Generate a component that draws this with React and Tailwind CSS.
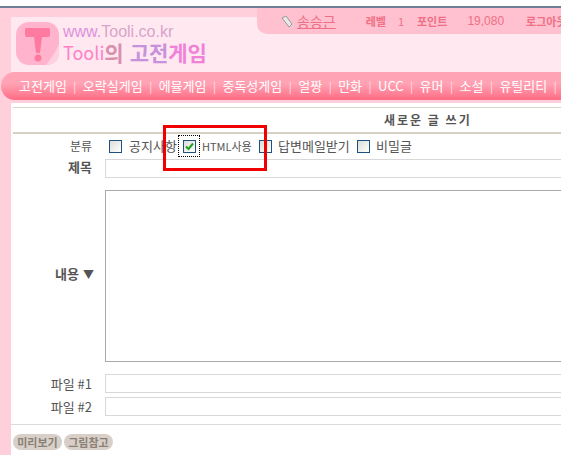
import React from 'react';

const KR = { fontFamily: '"Noto Sans CJK KR", "Liberation Sans", sans-serif' };
const LATIN = { fontFamily: '"Liberation Sans", sans-serif' };

const navItems = ['고전게임', '오락실게임', '에뮬게임', '중독성게임', '얼짱', '만화', 'UCC', '유머', '소설', '유틸리티'];

const Logo = () => (
  <svg width="44" height="44" viewBox="0 0 44 44" className="shrink-0">
    <rect x="0" y="0" width="43" height="43" rx="13" fill="#ffb3cc" />
    <path d="M30 43 Q40 30 43 22 L43 32 Q42 43 30 43 Z" fill="#ffd0df" />
    <path d="M10 6 H33 Q34 6 34 8 V13 Q34 15 32 15 H26 L24 31 H20 L18 15 H11 Q9 15 9 13 V8 Q9 6 10 6 Z" fill="#ff7aa0" />
    <circle cx="22" cy="36" r="3.5" fill="#ff7aa0" />
  </svg>
);

const CheckBox = ({ checked }) => (
  <span className="flex h-[13px] w-[13px] shrink-0 items-center justify-center border border-[#1c5180] bg-gradient-to-br from-[#dcdcd7] to-white">
    {checked && (
      <svg width="9" height="9" viewBox="0 0 9 9">
        <path d="M1 4.5 L3.5 7 L8 1.5" fill="none" stroke="#21a121" strokeWidth="2" />
      </svg>
    )}
  </span>
);

const Row = ({ label, labelClass, className, children }) => (
  <div className={`flex ${className}`}>
    <div className={`flex w-[79px] shrink-0 items-center justify-end whitespace-nowrap text-[#555] ${labelClass}`}>
      {label}
    </div>
    {children}
  </div>
);

export default function App() {
  return (
    <div className="relative h-[455px] w-[561px] overflow-hidden bg-[#ffcfdc]" style={KR}>
      {/* browser chrome leftover */}
      <div className="h-[6px] bg-white" />
      <div className="h-[2px] bg-[#6f7f96]" />

      {/* header */}
      <div className="ml-[11px] h-[64px] pt-[9px]">
        <div className="flex h-[55px] bg-[#ffe8ef]">
          <div className="flex items-start pl-[5px] pt-[5px]">
            <Logo />
            <div className="ml-[3px] flex flex-col">
              <span className="mt-[1px] text-[16px] leading-[17px] text-[#d8a4cc]" style={LATIN}>
                <span className="text-[#e090e0]">www.</span>Tooli.co.kr
              </span>
              <span className="mt-[1px] flex items-center whitespace-nowrap text-[21px] font-bold leading-[22px]">
                <span className="text-[18px] font-normal text-[#ff80c8]">Tooli</span>
                <span className="text-[#d890b0]">의</span>
                <span className="ml-[6px] text-[#c792dc]">고전</span>
                <span className="text-[#f080d8]">게임</span>
              </span>
            </div>
          </div>
        </div>
      </div>

      {/* user info tab */}
      <div className="absolute left-[257px] right-0 top-[8px] flex h-[26px] items-center whitespace-nowrap rounded-bl-[10px] bg-[#ffc0cf] text-[11px] text-[#f06f85]">
        <svg width="13" height="13" viewBox="0 0 13 13" className="ml-[23px] shrink-0">
          <path d="M2 3 L6 1 L12 9 L9 12 Z" fill="#e8e8e8" stroke="#999" strokeWidth="1" />
        </svg>
        <span className="ml-[4px] text-[14px] underline">송승근</span>
        <span className="ml-[30px] font-bold">레벨</span>
        <span className="ml-[12px]">1</span>
        <span className="ml-[13px] font-bold">포인트</span>
        <span className="ml-[20px] text-[12px]" style={LATIN}>19,080</span>
        <span className="ml-[22px] font-bold">로그아웃</span>
      </div>

      {/* nav */}
      <div className="ml-[1px] flex h-[28px] items-center overflow-hidden whitespace-nowrap rounded-l-[14px] bg-gradient-to-b from-[#ffa3b5] from-40% to-[#ff6a84] pl-[18px] text-[13px] text-white">
        {navItems.map((item) => (
          <React.Fragment key={item}>
            <span>{item}</span>
            <span className="mx-[6.5px] text-[11px] text-[#ffe0e6]">|</span>
          </React.Fragment>
        ))}
      </div>

      {/* content */}
      <div className="ml-[11px] mt-[3px] h-[352px] bg-white pl-[2px] pt-[4px]">
        <div className="h-[1px] bg-[#d8d4cc]" />
        <div className="flex h-[24px] items-center pl-[371px] text-[12px] font-bold tracking-[2px] text-[#555]">
          새로운 글 쓰기
        </div>
        <div className="h-[2px] bg-[#d6d0c4]" />

        <Row label="분류" labelClass="text-[12px]" className="mt-[1px] h-[22px]">
          <div className="flex items-center whitespace-nowrap text-[13px] text-[#555]">
            <span className="ml-[17px]"><CheckBox /></span>
            <span className="ml-[7px] w-[46px]">공지사항</span>
            <span className="ml-[3px] flex h-[22px] w-[22px] items-center justify-center border border-dotted border-black">
              <CheckBox checked />
            </span>
            <span className="ml-[2px] w-[50px] text-[11px]">HTML사용</span>
            <span className="ml-[7px]"><CheckBox /></span>
            <span className="ml-[6px] w-[71px]">답변메일받기</span>
            <span className="ml-[8px]"><CheckBox /></span>
            <span className="ml-[6px]">비밀글</span>
          </div>
        </Row>

        <Row label="제목" labelClass="pb-[3px] text-[13px] font-bold" className="mt-[2px] h-[19px]">
          <div className="ml-[13px] flex-1 border border-r-0 border-[#d8d8d8]" />
        </Row>

        <Row
          label={<span className="-mr-[2px] flex items-center gap-[4px]">내용 <span className="text-[11px]">▼</span></span>}
          labelClass="pb-[4px] text-[13px] font-bold"
          className="mt-[12px] h-[172px]"
        >
          <div className="ml-[13px] flex-1 border border-r-0 border-[#a8a8a8]" />
        </Row>

        <Row label="파일 #1" labelClass="text-[13px]" className="mt-[12px] h-[19px]">
          <div className="ml-[13px] flex-1 border border-r-0 border-[#d8d8d8]" />
        </Row>
        <Row label="파일 #2" labelClass="text-[13px]" className="mt-[4px] h-[19px]">
          <div className="ml-[13px] flex-1 border border-r-0 border-[#d8d8d8]" />
        </Row>

        <div className="-ml-[2px] mt-[8px] h-[1px] bg-[#dcdcdc]" />
        <div className="mt-[9px] flex gap-[2px]">
          <span className="flex h-[16px] w-[49px] items-center justify-center rounded-full bg-[#d8d0c8] text-[11px] font-bold text-[#8a8078]">미리보기</span>
          <span className="flex h-[16px] w-[49px] items-center justify-center rounded-full bg-[#d8d0c8] text-[11px] font-bold text-[#8a8078]">그림참고</span>
        </div>
      </div>

      {/* red annotation box */}
      <div className="absolute left-[163px] top-[125px] h-[46px] w-[104px] border-[3px] border-[#f00000]" />
    </div>
  );
}
